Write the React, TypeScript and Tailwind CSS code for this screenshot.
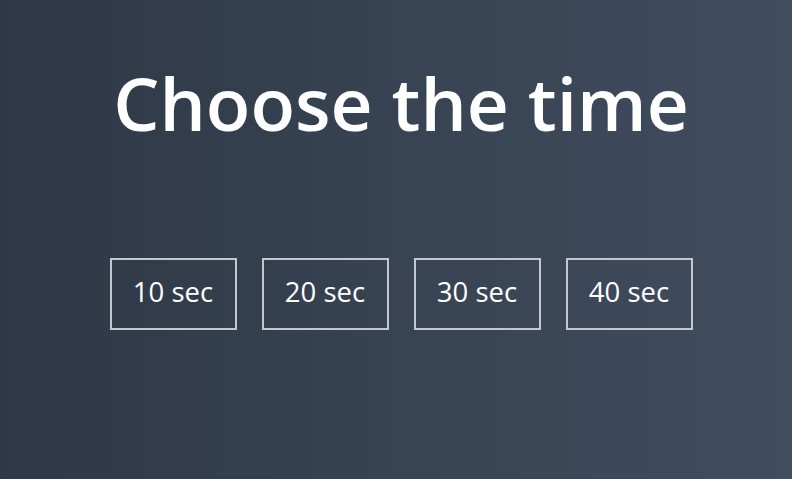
export default function App() {
  const times = ["10 sec", "20 sec", "30 sec", "40 sec"];
  return (
    <div
      className="w-[792px] h-[479px] bg-gradient-to-r from-[#2e3846] to-[#414d5f] flex flex-col items-center pl-[10px] text-white"
      style={{ fontFamily: '"Open Sans", "Noto Sans", sans-serif' }}
    >
      <h1 className="mt-[55px] text-[73px] leading-[96px] font-semibold">Choose the time</h1>
      <div className="mt-[107px] flex gap-[25px]">
        {times.map((t) => (
          <button
            key={t}
            className="w-[127px] h-[72px] border-2 border-[#c3c8cf] text-[27.5px] leading-[30px] pb-[5px] font-medium text-white flex items-center justify-center"
          >
            {t}
          </button>
        ))}
      </div>
    </div>
  );
}
